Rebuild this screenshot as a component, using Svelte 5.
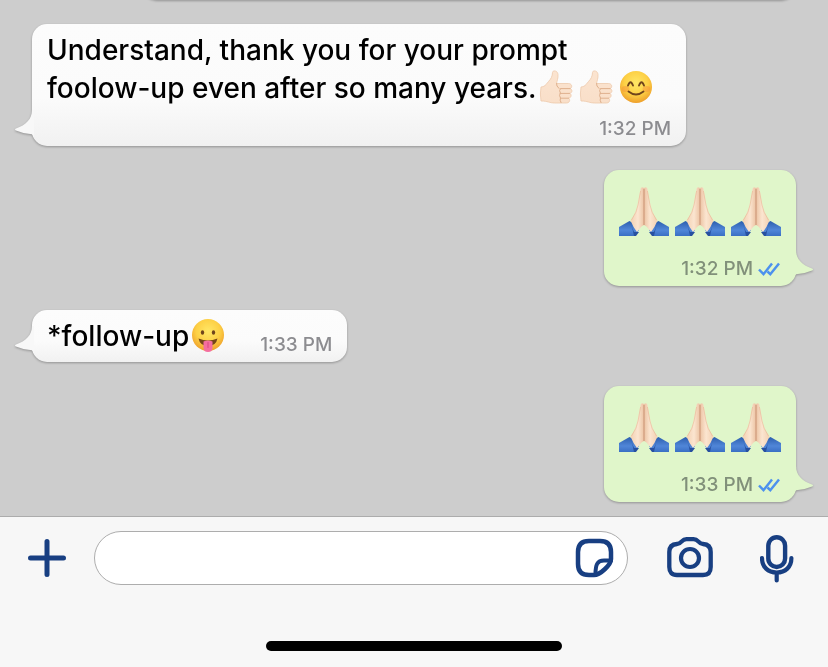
<script>
  const messages = [
    { from: 'them', text: 'Understand, thank you for your prompt foolow-up even after so many years.', emoji: ['thumb', 'thumb', 'smile'], time: '1:32 PM', long: true },
    { from: 'me', emoji: ['pray', 'pray', 'pray'], time: '1:32 PM' },
    { from: 'them', text: '*follow-up', emoji: ['tongue'], time: '1:33 PM' },
    { from: 'me', emoji: ['pray', 'pray', 'pray'], time: '1:33 PM' }
  ];
  const names = { thumb: 'Thumbs up', smile: 'Smiling face', pray: 'Folded hands', tongue: 'Face with tongue' };
  let draft = $state('');
</script>

<svg class="defs" aria-hidden="true">
  <defs>
    <radialGradient id="face" cx="50%" cy="38%" r="62%">
      <stop offset="0" stop-color="#ffe766" />
      <stop offset=".6" stop-color="#fdd045" />
      <stop offset="1" stop-color="#ee9f2b" />
    </radialGradient>
    <linearGradient id="skin" x1="0" y1="0" x2="1" y2="0">
      <stop offset="0" stop-color="#f3d0b2" />
      <stop offset=".55" stop-color="#fbe5d0" />
      <stop offset="1" stop-color="#ecc3a3" />
    </linearGradient>
    <linearGradient id="skin2" x1="1" y1="0" x2="0" y2="0">
      <stop offset="0" stop-color="#f3d0b2" />
      <stop offset=".55" stop-color="#fbe5d0" />
      <stop offset="1" stop-color="#ecc3a3" />
    </linearGradient>
    <linearGradient id="palm" x1="0" y1="0" x2="0" y2="1">
      <stop offset="0" stop-color="#fbe4d0" />
      <stop offset="1" stop-color="#f9dfc9" />
    </linearGradient>
    <linearGradient id="sleeve" x1="0" y1="0" x2="0" y2="1">
      <stop offset="0" stop-color="#2d5fae" />
      <stop offset=".6" stop-color="#5086d8" />
      <stop offset="1" stop-color="#3a6fc4" />
    </linearGradient>
  </defs>
  <symbol id="thumb" viewBox="0 0 34 34">
    <path d="M2 17C5 17 7 15 9.500 11.500C12 9 13.500 6 13.500 2.500C13.500 .2 18.500 0 19 4.500C19.300 8 18 11 17.500 13.500H29.500C33.500 13.500 33.500 18.300 30.800 18.600C33.800 19 33.500 23.200 30.500 23.400C33 24 32.500 28 29.500 28.200C31.500 29 31 33 27.500 33H16C10 33 9 31 2 31Q.8 24 2 17Z" fill="url(#palm)" stroke="#edc9ab" stroke-width=".8" />
    <path d="M17.500 13.500Q17 16 20 18.500M22 18.600H31M21 23.400H30.500M21.500 28.200H29.500M21.500 18.500Q19.500 20.500 21.500 23.200Q19.500 25 21.500 28Q20.500 30 22 32.600" fill="none" stroke="#dfb08d" stroke-width="1" stroke-linecap="round" />
  </symbol>
  <symbol id="smile" viewBox="0 0 34 34">
    <circle cx="17" cy="17" r="16" fill="url(#face)" />
    <ellipse cx="6.500" cy="19" rx="4" ry="3" fill="#f68a3d" opacity=".4" />
    <ellipse cx="27.500" cy="19" rx="4" ry="3" fill="#f68a3d" opacity=".4" />
    <path d="M9 15.500Q11.500 9 14 15.500M20 15.500Q22.500 9 25 15.500M9.500 21.500Q17 27.500 24.500 21.500" fill="none" stroke="#70451c" stroke-width="1.900" stroke-linecap="round" />
  </symbol>
  <symbol id="tongue" viewBox="0 0 34 34">
    <circle cx="17" cy="17" r="16" fill="url(#face)" />
    <ellipse cx="11.500" cy="14.500" rx="1.700" ry="2.300" fill="#70451c" />
    <ellipse cx="22.500" cy="14.500" rx="1.700" ry="2.300" fill="#70451c" />
    <path d="M7.500 20.500Q17 24.500 26.500 20.500Q25 28 17 28Q9 28 7.500 20.500Z" fill="#744519" />
    <path d="M12.500 23.500Q17 21.500 21.500 23.500V29.500Q21.500 34 17 34Q12.500 34 12.500 29.500Z" fill="#f46e9f" />
    <path d="M17 24.500V29.500" stroke="#d94780" stroke-width="1" stroke-linecap="round" />
  </symbol>
  <symbol id="pray" viewBox="0 0 50 51">
    <path d="M0 41L10.500 35Q17 38 20 44L16 50H0Z" fill="url(#sleeve)" />
    <path d="M50 41L39.500 35Q33 38 30 44L34 50H50Z" fill="url(#sleeve)" />
    <path d="M10.500 35Q13 41 15 46L20 46L17 50H15Q14 42 10.500 35ZM39.500 35Q37 41 35 46L30 46L33 50H35Q36 42 39.500 35Z" fill="#2750a0" />
    <path d="M25 2Q21.500 0 21.300 4L18.700 18Q17.500 26 11.500 34.500Q14 41 18 46Q20.500 43 22.500 40.500L25 39Z" fill="url(#skin)" />
    <path d="M25 2Q28.500 0 28.700 4L31.300 18Q32.500 26 38.500 34.500Q36 41 32 46Q29.500 43 27.500 40.500L25 39Z" fill="url(#skin2)" />
    <path d="M25 3V39" fill="none" stroke="#c08767" stroke-width=".8" />
    <path d="M21.600 5L19 19Q18 26 12.500 34M28.400 5L31 19Q32 26 37.500 34" fill="none" stroke="#e6b894" stroke-width=".6" />
  </symbol>
</svg>

<div class="app">
  <main class="chat">
    <div class="bubble me previous"></div>
    {#each messages as message}
      <article class="bubble {message.from}" class:inline={message.text && !message.long}>
        {#if message.text}
          <p class="text">{message.text}{#each message.emoji as name}<svg class="emoji" role="img" aria-label={names[name]}><use href="#{name}" /></svg>{/each}</p>
        {:else}
          <div class="big">
            {#each message.emoji as name}<svg role="img" aria-label={names[name]}><use href="#{name}" /></svg>{/each}
          </div>
        {/if}
        <footer class="meta">
          <time>{message.time}</time>
          {#if message.from === 'me'}
            <svg class="ticks" viewBox="0 0 23 16" role="img" aria-label="Read">
              <path d="M1 8.500L5.500 13.200L14 2.500M9.500 10.500L12.300 13.200L21 2.500" fill="none" stroke="#4c91ee" stroke-width="2.500" />
            </svg>
          {/if}
        </footer>
        <svg class="tail" viewBox="0 0 20 28" aria-hidden="true">
          <path d="M20 0H18C18 9 12 15 2 18.500Q0 19.500 2 20.500Q10 24 18 24.300L20 27Z" />
        </svg>
      </article>
    {/each}
  </main>

  <form class="composer" onsubmit={(e) => e.preventDefault()}>
    <div class="row">
      <button class="plus" type="button" aria-label="Attach">
        <svg width="38" height="40" viewBox="0 0 38 40"><path d="M2.500 20H35.500M19 3.500V36.500" stroke-width="5" /></svg>
      </button>
      <div class="field">
        <input type="text" aria-label="Message" bind:value={draft} />
        <button type="button" aria-label="Stickers">
          <svg width="39" height="40" viewBox="0 0 39 40">
            <path d="M36 21V14Q36 3 25 3H14Q3 3 3 14V26Q3 37 14 37H19C25 37 36 27 36 21Z" stroke-width="4.500" />
            <path d="M20.500 36C20.500 27 22 22.500 29 22.500H36" stroke-width="4" />
          </svg>
        </button>
      </div>
      <button class="camera" type="button" aria-label="Camera">
        <svg width="46" height="42" viewBox="0 0 46 42">
          <path d="M10 7Q12.500 7 14 5Q17 2.200 19.500 2.200H26.500Q29 2.200 32 5Q33.500 7 36 7Q43.700 7.500 43.700 15V30Q43.700 38 36 38H10Q2.300 38 2.300 30V15Q2.300 7.500 10 7Z" stroke-width="4.300" />
          <circle cx="23" cy="21" r="9" stroke-width="4.200" />
        </svg>
      </button>
      <button class="mic" type="button" aria-label="Record voice message">
        <svg width="34" height="50" viewBox="0 0 34 50">
          <rect x="8.300" y="4.300" width="16.800" height="29.700" rx="8.400" stroke-width="4.400" />
          <path d="M2 25C2 34 8 39.500 16.700 39.500S31.400 34 31.400 25M16.700 39.500V47.500" stroke-width="4.200" />
        </svg>
      </button>
    </div>
    <div class="home"></div>
  </form>
</div>

<style>
  :global(body) { margin: 0; }
  .defs { position: absolute; width: 0; height: 0; }
  .app {
    display: flex;
    flex-direction: column;
    height: 100vh;
    background: #cdcdcd;
    font-family: Inter, "Liberation Sans", sans-serif;
  }
  .chat {
    flex: 1;
    min-height: 0;
    overflow: hidden;
    display: flex;
    flex-direction: column;
    justify-content: flex-end;
    gap: 24px;
    padding: 0 32px 14px;
  }
  .bubble {
    position: relative;
    flex: none;
    box-sizing: border-box;
    max-width: 654px;
    padding: 7px 15px 5px;
    border-radius: 15px;
    filter: drop-shadow(0 1px 1px #00000048);
  }
  .them {
    align-self: flex-start;
    background: linear-gradient(#fcfcfc, #fbfbfb 60%, #f1f1f1);
  }
  .me {
    align-self: flex-end;
    background: #e0f6ca;
  }
  .previous {
    width: 656px;
    height: 40px;
  }
  .inline {
    display: flex;
    align-items: flex-end;
    gap: 31px;
  }
  .inline .text { padding-bottom: 2px; }
  .text {
    margin: 0;
    font-size: 28px;
    line-height: 38px;
    font-weight: 550;
    color: #000;
  }
  .emoji {
    width: 34px;
    height: 34px;
    margin: 0 4px 0 2px;
    vertical-align: -6px;
  }
  .big {
    display: flex;
    gap: 6px;
    padding: 9px 0 20px;
  }
  .big svg { width: 50px; height: 51px; }
  .meta {
    display: flex;
    justify-content: flex-end;
    align-items: center;
    gap: 5px;
    font-size: 19px;
    line-height: 24px;
    font-weight: 500;
    color: #8c8c90;
    white-space: nowrap;
  }
  .text + .meta { margin-top: 10px; }
  .inline .text + .meta { margin-top: 0; }
  .me .meta { color: #81907a; }
  .ticks { width: 23px; height: 16px; }
  .tail {
    position: absolute;
    bottom: 8px;
    left: -18px;
    width: 20px;
    height: 28px;
    fill: #f8f8f8;
  }
  .me .tail {
    left: auto;
    right: -18px;
    fill: #e0f6ca;
    transform: scaleX(-1);
  }
  .composer {
    background: #f7f7f7;
    border-top: 1px solid #acacac;
    padding: 14px 0 16px;
  }
  .row {
    display: flex;
    align-items: center;
    padding: 0 34px 0 28px;
  }
  button {
    display: flex;
    padding: 0;
    border: 0;
    background: none;
    cursor: pointer;
  }
  button svg {
    fill: none;
    stroke: #183f82;
    stroke-linecap: round;
    stroke-linejoin: round;
  }
  .field {
    flex: 1;
    display: flex;
    align-items: center;
    box-sizing: border-box;
    height: 54px;
    margin: 0 39px 0 28px;
    padding: 0 13px 0 20px;
    border: 1px solid #adadad;
    border-radius: 27px;
    background: #fff;
  }
  input {
    flex: 1;
    min-width: 0;
    border: 0;
    outline: 0;
    background: none;
    font: 500 28px Inter, "Liberation Sans", sans-serif;
  }
  .mic { margin-left: 47px; }
  .home {
    width: 296px;
    height: 10px;
    margin: 56px auto 0;
    border-radius: 5px;
    background: #000;
  }
</style>
